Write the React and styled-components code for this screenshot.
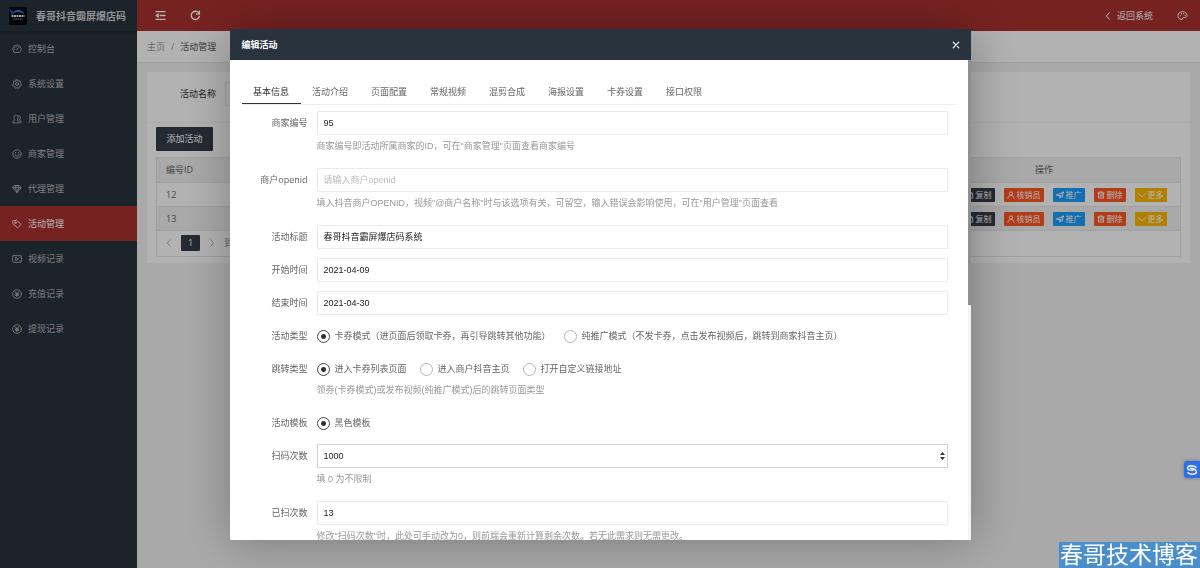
import React from 'react';
import styled, { createGlobalStyle, css } from 'styled-components';

const Global = createGlobalStyle`
  *, *::before, *::after { box-sizing: border-box; }
  html, body { margin: 0; }
  body {
    background: #f2f2f2;
    color: #666;
    font: 9px/24px "Open Sans", "Noto Sans CJK SC", sans-serif;
  }
  a { color: inherit; text-decoration: none; }
  button, input { font: inherit; color: inherit; margin: 0; }
  button { border: 0; padding: 0; background: none; cursor: pointer; }
  ul { list-style: none; margin: 0; padding: 0; }
`;

/* ---------- icons ---------- */

const Svg = styled.svg`
  flex: none;
  display: block;
  width: ${p => p.$size || 10}px;
  height: ${p => p.$size || 10}px;
  fill: none;
  stroke: currentColor;
  stroke-width: ${p => p.$stroke || 2};
  stroke-linecap: round;
  stroke-linejoin: round;
`;

const shapes = {
  gauge: (
    <>
      <path d="M4.400 19A10 10 0 1 1 19.600 19Q18.800 20.500 17.400 20.500H6.600Q5.200 20.500 4.400 19Z" />
      <path d="M11 14.500L16 8.500M12 5.500v1.200M6.500 12.500H5.300M7.600 8.400l.8.8" />
    </>
  ),
  gear: (
    <>
      <circle cx="12" cy="12" r="3.600" />
      <path d="M10 2h4l.7 2.900 1.800.8L19 4.100 21.300 7l-1.600 2.500.5 2L22.500 13l-1 3.400-2.900.3-1.300 1.500.3 2.800-3.300 1.300L12 20.200l-2.300 2.100L6.400 21l.3-2.800-1.300-1.500-2.900-.3-1-3.400 2.300-1.500.5-2L2.700 7 5 4.100l2.500 1.600 1.800-.8z" />
    </>
  ),
  users: (
    <>
      <path d="M2 20.500c0-3.600 2.200-5 5.200-5.800C5 12.600 4.600 10.500 4.600 8.300 4.600 5 6.800 3 9.800 3s5.200 2 5.200 5.300c0 2.200-.5 4.300-2.600 6.400 3 .8 5.200 2.200 5.200 5.800z" />
      <path d="M16 4c2.600.5 4 2.300 4 4.800 0 2-.6 3.600-2.200 5.200 2.600.8 4.200 2.300 4.200 6h-2" />
    </>
  ),
  smile: (
    <>
      <circle cx="12" cy="12" r="10" />
      <path d="M7 13.500c1 5 9 5 10 0M8.500 8.500v1M15.500 8.500v1" />
    </>
  ),
  gem: (
    <>
      <path d="M6.500 3.500h11L22 9 12 21 2 9z" />
      <path d="M2 9h20M8 9l4 11 4-11-2-5M8 9l2-5" />
    </>
  ),
  tag: (
    <>
      <path d="M2.500 4.500L11 3l10.500 10-8 8.500L3 12z" />
      <circle cx="8.500" cy="8.800" r="2" />
    </>
  ),
  video: (
    <>
      <rect x="1.500" y="4" width="21" height="16" rx="1.500" />
      <path d="M9.500 8.500l5.500 3.500-5.500 3.500zM18.500 8h1M18.500 16h1" />
    </>
  ),
  yen: (
    <>
      <circle cx="12" cy="12" r="10.500" />
      <path d="M8 6.500l4 5 4-5M12 11.500V18M8 12h8M8 15h8" strokeWidth="2.400" />
    </>
  ),
  shrink: <path d="M2 3.500h20M11 12h11M2 20.500h20M7 8.500L2.500 12 7 15.500z" />,
  refresh: <path d="M20.500 14A9 9 0 1 1 18.500 5.800M20.500 2.500V9H14" />,
  back: <path d="M16 2L7 12l9 10" />,
  next: <path d="M8 2l9 10-9 10" />,
  theme: (
    <>
      <path d="M9 20.500C4.500 20 2 16.500 2 12.500 2 7 6.500 3.500 12 3.500S22 7 22 12c0 3-2 4.500-4.500 4.500h-3c-2 0-2.500 1.500-2 2.500.4 1.200-1 2-3.500 1.500z" />
      <path d="M6.800 12.500h.4M9.500 8h.4M14.500 8h.4M17.500 12h.4" strokeWidth="2.600" />
    </>
  ),
  close: <path d="M3.500 3.500l17 17M20.500 3.500l-17 17" />,
  copy: <path d="M4 2.500h10l6 6v13H4zM14 2.500v6h6" />,
  edit: <path d="M3 21l1.500-6L16 3.500 20.500 8 9 19.500z" />,
  person: (
    <>
      <circle cx="12" cy="7.500" r="5" />
      <path d="M3 22c0-6 4-9 9-9s9 3 9 9" />
    </>
  ),
  plane: <path d="M1.500 12L22.500 3l-4 16-7-4.500zM11.500 14.500L22.500 3M11.500 14.500V21l3-4.500" />,
  trash: <path d="M2 6h20M8 6V2.500h8V6M4.500 6v15.500h15V6M9.500 10.500v7M14.500 10.500v7" />,
  down: <path d="M1.500 7L12 17.500 22.500 7" />,
};

const Icon = ({ name, size, stroke }) => (
  <Svg viewBox="0 0 24 24" $size={size} $stroke={stroke} aria-hidden="true">
    {shapes[name]}
  </Svg>
);

/* ---------- page frame ---------- */

const Layout = styled.div`
  display: grid;
  grid-template-columns: 137px minmax(0, 1fr);
  min-height: 100vh;
`;

const Sidebar = styled.nav`
  background: #28333e;
  color: #b4b8bc;
`;

const Brand = styled.a`
  display: flex;
  align-items: center;
  gap: 9px;
  height: 31px;
  padding-left: 9px;
  color: #cfd2d4;
  font-size: 10px;
  font-weight: 700;
  white-space: nowrap;
  box-shadow: 0 1px 2px rgba(0, 0, 0, 0.25);
`;

const NavLink = styled.a`
  display: flex;
  align-items: center;
  gap: 6px;
  height: 35px;
  padding-left: 12px;
  ${p => p.$active && css`
    background: #aa3130;
    color: #fff;
  `}
`;

const Main = styled.div`
  display: flex;
  flex-direction: column;
`;

const TopBar = styled.header`
  display: flex;
  align-items: center;
  height: 31px;
  padding: 0 12px 0 18px;
  background: #aa3130;
  color: #fff;
`;

const TopButton = styled.button`
  display: flex;
  align-items: center;
  gap: 5px;
  margin-right: 24px;
  &:last-child { margin-right: 0; }
`;

const Spacer = styled.div`
  flex: 1;
`;

const Crumbs = styled.div`
  display: flex;
  align-items: center;
  gap: 6px;
  height: 32px;
  padding-left: 10px;
  background: #fff;
  border-bottom: 1px solid #e6e6e6;
  color: #999;
  & > :last-child { color: #555; }
`;

const Card = styled.section`
  margin: 9px 10px 0 10px;
  background: #fff;
  padding-bottom: 6px;
`;

const SearchRow = styled.form`
  display: flex;
  align-items: center;
  gap: 9px;
  height: 51px;
  padding: 0 33px 6px;
  border-bottom: 1px solid #f6f6f6;
  color: #333;
`;

const SearchInput = styled.input`
  width: 120px;
  height: 24px;
  border: 1px solid #e6e6e6;
`;

const CardBody = styled.div`
  padding: 4px 9px 0;
`;

const PrimaryButton = styled.button`
  display: block;
  width: 57px;
  height: 24px;
  border-radius: 1px;
  background: #363d49;
  color: #fff;
`;

const TableBox = styled.div`
  margin-top: 6px;
  border: 1px solid #e6e6e6;
`;

const Table = styled.table`
  width: 100%;
  table-layout: fixed;
  border-collapse: collapse;
  th, td {
    height: 24px;
    padding: 1px 9px 0;
    line-height: 14px;
    font-weight: 400;
    text-align: left;
    border-bottom: 1px solid #e6e6e6;
  }
  th { background: #f2f2f2; }
  tbody tr:nth-child(even) { background: #f2f2f2; }
  th:last-child { text-align: center; }
`;

const IdCol = styled.col`
  width: 90px;
`;

const ActionsCol = styled.col`
  width: 272px;
`;

const Actions = styled.div`
  display: flex;
  justify-content: center;
  gap: 9px;
`;

const tones = { dark: '#363d49', red: '#ff5722', blue: '#1e9fff', amber: '#ffb800' };

const SmallButton = styled.button`
  display: flex;
  align-items: center;
  gap: 2px;
  height: 14px;
  padding: 0 3px;
  border-radius: 1px;
  background: ${p => tones[p.$tone]};
  color: #fff;
  font-size: 8px;
  line-height: 14px;
  white-space: nowrap;
`;

const Pager = styled.div`
  display: flex;
  align-items: center;
  gap: 8px;
  height: 25px;
  padding-left: 8px;
  color: #888;
`;

const PageButton = styled.button`
  display: grid;
  place-items: center;
  height: 16px;
  line-height: 16px;
  ${p => p.$current && css`
    width: 19px;
    border-radius: 1px;
    background: #363d49;
    color: #fff;
  `}
`;

/* ---------- dialog ---------- */

const Overlay = styled.div`
  position: fixed;
  inset: 0;
  display: flex;
  justify-content: center;
  padding: 29px 16px 28px;
  background: rgba(0, 0, 0, 0.3);
`;

const Dialog = styled.div`
  display: flex;
  flex-direction: column;
  width: 100%;
  max-width: 741px;
  background: #fff;
  border-radius: 1px;
  box-shadow: 1px 1px 50px rgba(0, 0, 0, 0.3);
`;

const DialogHead = styled.div`
  flex: none;
  display: flex;
  align-items: center;
  justify-content: space-between;
  height: 31px;
  padding: 0 11px 0 12px;
  background: #28333e;
  color: #fff;
`;

const DialogTitle = styled.h2`
  margin: 0;
  font-size: 9px;
  font-weight: 700;
`;

const DialogBody = styled.div`
  flex: 1;
  min-height: 0;
  display: flex;
`;

const DialogScroll = styled.div`
  flex: 1;
  min-width: 0;
  overflow: hidden;
  padding: 19px 12px 0;
`;

const Track = styled.div`
  width: 3px;
  background: #f4f4f4;
`;

const Thumb = styled.div`
  height: 51%;
  background: #8f8f8f;
`;

const Tabs = styled.div`
  display: flex;
  height: 26px;
  border-bottom: 1px solid #eee;
`;

const Tab = styled.button`
  width: 59px;
  height: 25px;
  line-height: 24px;
  white-space: nowrap;
  ${p => p.$active && css`
    color: #333;
    box-shadow: inset 0 -1px #28333e;
  `}
`;

const Form = styled.form`
  padding: 6px 8px 0 5px;
`;

const Row = styled.div`
  display: grid;
  grid-template-columns: 61px minmax(0, 1fr);
  column-gap: 9px;
  margin-bottom: 9px;
`;

const RowLabel = styled.label`
  text-align: right;
  white-space: nowrap;
`;

const TextInput = styled.input`
  display: block;
  width: 100%;
  height: 24px;
  padding: 0 6px;
  border: 1px solid ${p => (p.$hovered ? '#d2d2d2' : '#eaeaea')};
  border-radius: 1px;
  outline: none;
  background: #fff;
  color: #222;
  font-family: "Liberation Sans", "Noto Sans CJK SC", sans-serif;
  appearance: textfield;
  &::placeholder { color: #bbb; opacity: 1; }
  &::-webkit-inner-spin-button { appearance: none; }
`;

const NumberBox = styled.div`
  position: relative;
`;

const Spinner = styled.svg`
  position: absolute;
  right: 2px;
  top: 7px;
  width: 7px;
  height: 10px;
  fill: #333;
`;

const Hint = styled.p`
  margin: 0;
  height: ${p => (p.$tight ? 21 : 24)}px;
  line-height: ${p => (p.$tight ? 18 : 23)}px;
  color: #999;
  font-family: "Liberation Sans", "Noto Sans CJK SC", sans-serif;
  white-space: nowrap;
`;

const Choices = styled.div`
  display: flex;
  gap: 13px;
  height: 24px;
`;

const Choice = styled.label`
  display: flex;
  align-items: center;
  gap: 5px;
  white-space: nowrap;
`;

const Radio = styled.input`
  appearance: none;
  flex: none;
  width: 13px;
  height: 13px;
  border: 1px solid #b4b4b4;
  border-radius: 50%;
  &:checked {
    border-color: #444;
    background: radial-gradient(circle, #333 2px, transparent 3px);
  }
`;

/* ---------- floating items ---------- */

const FloatBadge = styled.button`
  position: fixed;
  right: 0;
  bottom: 90px;
  display: grid;
  place-items: center;
  width: 16px;
  height: 17px;
  border-radius: 3px 0 0 3px;
  background: #2e6fe3;
  color: #fff;
  box-shadow: 0 0 4px rgba(40, 70, 140, 0.5);
`;

const Watermark = styled.div`
  position: fixed;
  right: 0;
  bottom: 0;
  padding: 0 2px 0 1px;
  height: 26px;
  background: #4a8fcc;
  color: #fff;
  font: 23px/22px "Noto Sans CJK SC", sans-serif;
  white-space: nowrap;
`;

const nav = [
  ['gauge', '控制台'],
  ['gear', '系统设置'],
  ['users', '用户管理'],
  ['smile', '商家管理'],
  ['gem', '代理管理'],
  ['tag', '活动管理'],
  ['video', '视频记录'],
  ['yen', '充值记录'],
  ['yen', '提现记录'],
];

const actions = [
  ['dark', 'edit', '编辑'],
  ['dark', 'copy', '复制'],
  ['red', 'person', '核销员'],
  ['blue', 'plane', '推广'],
  ['red', 'trash', '删除'],
  ['amber', 'down', '更多'],
];

const tabs = ['基本信息', '活动介绍', '页面配置', '常规视频', '混剪合成', '海报设置', '卡券设置', '接口权限'];

const Logo = () => (
  <svg width="18" height="18" viewBox="0 0 36 36" aria-hidden="true">
    <rect width="36" height="36" fill="#05070c" />
    <path d="M5 16C9 3 27 3 31 15C25 8 12 8 5 16Z" fill="#2b7de0" />
    <path d="M1 3l9 8-5 5z" fill="#1c59b8" />
    <path d="M5 18h26" stroke="#dfe8f4" strokeWidth="4" strokeDasharray="4 1" />
    <path d="M9 24h18" stroke="#8b98ab" strokeWidth="2" strokeDasharray="3 1" />
  </svg>
);

const Field = ({ id, label, hint, children, ...input }) => (
  <Row>
    <RowLabel htmlFor={id}>{label}</RowLabel>
    <div>
      {children || <TextInput id={id} {...input} />}
      {hint && <Hint>{hint}</Hint>}
    </div>
  </Row>
);

const RadioField = ({ name, label, options, hint }) => (
  <Row>
    <RowLabel as="span" id={name}>{label}</RowLabel>
    <div>
      <Choices role="radiogroup" aria-labelledby={name}>
        {options.map((text, i) => (
          <Choice key={text}>
            <Radio type="radio" name={name} defaultChecked={i === 0} />
            {text}
          </Choice>
        ))}
      </Choices>
      {hint && <Hint $tight>{hint}</Hint>}
    </div>
  </Row>
);

export default function App() {
  return (
    <>
      <Global />
      <Layout>
        <Sidebar>
          <Brand href="#home"><Logo />春哥抖音霸屏爆店码</Brand>
          <ul>
            {nav.map(([icon, text]) => (
              <li key={text}>
                <NavLink href="#nav" $active={text === '活动管理'}>
                  <Icon name={icon} />{text}
                </NavLink>
              </li>
            ))}
          </ul>
        </Sidebar>
        <Main>
          <TopBar>
            <TopButton aria-label="menu"><Icon name="shrink" size={11} stroke={2.8} /></TopButton>
            <TopButton aria-label="refresh"><Icon name="refresh" size={11} stroke={3} /></TopButton>
            <Spacer />
            <TopButton><Icon name="back" size={8} stroke={3} />返回系统</TopButton>
            <TopButton aria-label="theme"><Icon name="theme" size={11} /></TopButton>
          </TopBar>
          <Crumbs>
            <a href="#home">主页</a>
            <span>/</span>
            <span>活动管理</span>
          </Crumbs>
          <Card>
            <SearchRow>
              <label htmlFor="keyword">活动名称</label>
              <SearchInput id="keyword" />
            </SearchRow>
            <CardBody>
              <PrimaryButton>添加活动</PrimaryButton>
              <TableBox>
                <Table>
                  <colgroup><IdCol /><col /><ActionsCol /></colgroup>
                  <thead>
                    <tr><th>编号ID</th><th /><th>操作</th></tr>
                  </thead>
                  <tbody>
                    {[12, 13].map(n => (
                      <tr key={n}>
                        <td>{n}</td>
                        <td />
                        <td>
                          <Actions>
                            {actions.map(([tone, icon, text]) => (
                              <SmallButton key={text} $tone={tone}>
                                <Icon name={icon} size={8} stroke={2.6} />{text}
                              </SmallButton>
                            ))}
                          </Actions>
                        </td>
                      </tr>
                    ))}
                  </tbody>
                </Table>
                <Pager>
                  <PageButton aria-label="previous"><Icon name="back" size={8} /></PageButton>
                  <PageButton $current>1</PageButton>
                  <PageButton aria-label="next"><Icon name="next" size={8} /></PageButton>
                  <span>到</span>
                </Pager>
              </TableBox>
            </CardBody>
          </Card>
        </Main>
      </Layout>

      <Overlay>
        <Dialog role="dialog" aria-labelledby="dialog-title">
          <DialogHead>
            <DialogTitle id="dialog-title">编辑活动</DialogTitle>
            <button aria-label="close"><Icon name="close" size={8} stroke={3.4} /></button>
          </DialogHead>
          <DialogBody>
            <DialogScroll>
              <Tabs role="tablist">
                {tabs.map((text, i) => (
                  <Tab key={text} role="tab" aria-selected={i === 0} $active={i === 0}>{text}</Tab>
                ))}
              </Tabs>
              <Form>
                <Field id="shop" label="商家编号" defaultValue="95" hint={'商家编号即活动所属商家的ID，可在"商家管理"页面查看商家编号'} />
                <Field id="openid" label="商户openid" placeholder="请输入商户openid" hint={'填入抖音商户OPENID，视频"@商户名称"时与该选项有关，可留空，输入错误会影响使用，可在"用户管理"页面查看'} />
                <Field id="title" label="活动标题" defaultValue="春哥抖音霸屏爆店码系统" />
                <Field id="start" label="开始时间" defaultValue="2021-04-09" />
                <Field id="end" label="结束时间" defaultValue="2021-04-30" />
                <RadioField
                  name="kind"
                  label="活动类型"
                  options={['卡券模式（进页面后领取卡券，再引导跳转其他功能）', '纯推广模式（不发卡券，点击发布视频后，跳转到商家抖音主页）']}
                />
                <RadioField
                  name="jump"
                  label="跳转类型"
                  options={['进入卡券列表页面', '进入商户抖音主页', '打开自定义链接地址']}
                  hint="领券(卡券模式)或发布视频(纯推广模式)后的跳转页面类型"
                />
                <RadioField name="template" label="活动模板" options={['黑色模板']} />
                <Field id="limit" label="扫码次数" hint="填 0 为不限制">
                  <NumberBox>
                    <TextInput id="limit" type="number" defaultValue="1000" $hovered />
                    <Spinner viewBox="0 0 7 10" aria-hidden="true">
                      <path d="M3.500 1L6 4H1zM3.500 9L6 6H1z" />
                    </Spinner>
                  </NumberBox>
                </Field>
                <Field id="used" label="已扫次数" type="number" defaultValue="13" hint={'修改"扫码次数"时，此处可手动改为0，则前端会重新计算剩余次数。若无此需求则无需更改。'} />
              </Form>
            </DialogScroll>
            <Track><Thumb /></Track>
          </DialogBody>
        </Dialog>
      </Overlay>

      <FloatBadge aria-label="assistant">
        <svg width="12" height="12" viewBox="0 0 24 24" fill="none" stroke="currentColor" strokeWidth="3" strokeLinecap="round" strokeLinejoin="round" aria-hidden="true">
          <path d="M20 6.500C18 4 15 3.500 10 3.500C4 3.500 2 7 4 10.500C5 12.500 9 12.500 14 12.500" />
          <path d="M4 17.500C6 20 9 20.500 14 20.500C20 20.500 22 17 20 13.500C19 11 15 9 9 8.500" />
        </svg>
      </FloatBadge>
      <Watermark>春哥技术博客</Watermark>
    </>
  );
}
